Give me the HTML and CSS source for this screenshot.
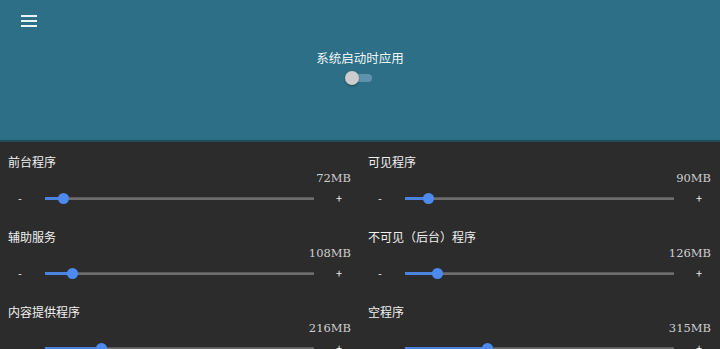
FILE: index.html
```html
<!DOCTYPE html>
<html lang="zh-CN">
<head>
  <meta charset="UTF-8">
  <meta name="viewport" content="width=device-width, initial-scale=1.0">
  <title>内存设置</title>
  <link rel="stylesheet" href="styles.css">
</head>
<body>
  <header class="topbar">
    <button class="menu-btn" aria-label="菜单">
      <svg width="16" height="12" viewBox="0 0 16 12"><path d="M0 1h16M0 6h16M0 11h16" stroke="#e8f4f8" stroke-width="2"/></svg>
    </button>
    <div class="boot">
      <span class="boot-title">系统启动时应用</span>
      <span class="switch"><span class="switch-track"></span><span class="switch-thumb"></span></span>
    </div>
  </header>

  <section class="limits">
    <div class="item">
      <div class="item-label">前台程序</div>
      <div class="item-value">72MB</div>
      <div class="slider-row">
        <span class="step">-</span>
        <div class="track"><div class="fill" style="width: 7%"></div></div>
        <span class="step">+</span>
      </div>
    </div>
    <div class="item">
      <div class="item-label">可见程序</div>
      <div class="item-value">90MB</div>
      <div class="slider-row">
        <span class="step">-</span>
        <div class="track"><div class="fill" style="width: 8.8%"></div></div>
        <span class="step">+</span>
      </div>
    </div>
    <div class="item">
      <div class="item-label">辅助服务</div>
      <div class="item-value">108MB</div>
      <div class="slider-row">
        <span class="step">-</span>
        <div class="track"><div class="fill" style="width: 10.5%"></div></div>
        <span class="step">+</span>
      </div>
    </div>
    <div class="item">
      <div class="item-label">不可见（后台）程序</div>
      <div class="item-value">126MB</div>
      <div class="slider-row">
        <span class="step">-</span>
        <div class="track"><div class="fill" style="width: 12.3%"></div></div>
        <span class="step">+</span>
      </div>
    </div>
    <div class="item">
      <div class="item-label">内容提供程序</div>
      <div class="item-value">216MB</div>
      <div class="slider-row">
        <span class="step">-</span>
        <div class="track"><div class="fill" style="width: 21.1%"></div></div>
        <span class="step">+</span>
      </div>
    </div>
    <div class="item">
      <div class="item-label">空程序</div>
      <div class="item-value">315MB</div>
      <div class="slider-row">
        <span class="step">-</span>
        <div class="track"><div class="fill" style="width: 30.8%"></div></div>
        <span class="step">+</span>
      </div>
    </div>
  </section>
</body>
</html>
```

FILE: styles.css
```css
* { box-sizing: border-box; margin: 0; padding: 0; }
html, body { height: 100%; }
body { font-family: "Noto Sans CJK SC", "Noto Sans", sans-serif; background: #2c2c2c; color: #eee; overflow: hidden; }

.topbar { position: relative; height: 142px; background: #2c6f86; border-bottom: 2px solid #1d4c5b; }
.menu-btn { position: absolute; top: 15px; left: 21px; background: none; border: none; width: 16px; height: 12px; line-height: 0; }
.boot { display: flex; flex-direction: column; align-items: center; padding-top: 48px; }
.boot-title { font-size: 12.5px; line-height: 20px; color: #f2f6f8; }
.switch { position: relative; width: 28px; height: 16px; margin-top: 2px; margin-left: -2px; }
.switch-track { position: absolute; left: 7px; top: 4px; width: 20px; height: 8px; border-radius: 4px; background: #5f93ad; }
.switch-thumb { position: absolute; left: 0; top: 1px; width: 14px; height: 14px; border-radius: 50%; background: #cdcdcd; box-shadow: 0 1px 2px rgba(0,0,0,0.35); }

.limits { display: grid; grid-template-columns: 1fr 1fr; padding-top: 11px; }
.item { height: 75px; }
.item-label { padding-left: 8px; font-size: 12px; line-height: 18px; color: #f0f0f0; }
.item-value { text-align: right; padding-right: 9px; margin-top: -1px; font-family: "DejaVu Serif", "Liberation Serif", serif; font-size: 11.5px; line-height: 16px; color: #cfcfcf; }
.slider-row { display: flex; align-items: center; height: 24px; padding: 0 9px 0 8px; }
.step { width: 24px; text-align: center; font-size: 11px; color: #eee; }
.track { position: relative; flex: 1; height: 3px; margin: 0 13px; background: #6e6e6e; border-top: 1px solid #5a5a5a; }
.fill { position: absolute; left: 0; top: -1px; height: 3px; background: #4a82e0; }
.fill::after { content: ""; position: absolute; right: -5px; top: -4px; width: 11px; height: 11px; border-radius: 50%; background: #4d8af0; }
```
